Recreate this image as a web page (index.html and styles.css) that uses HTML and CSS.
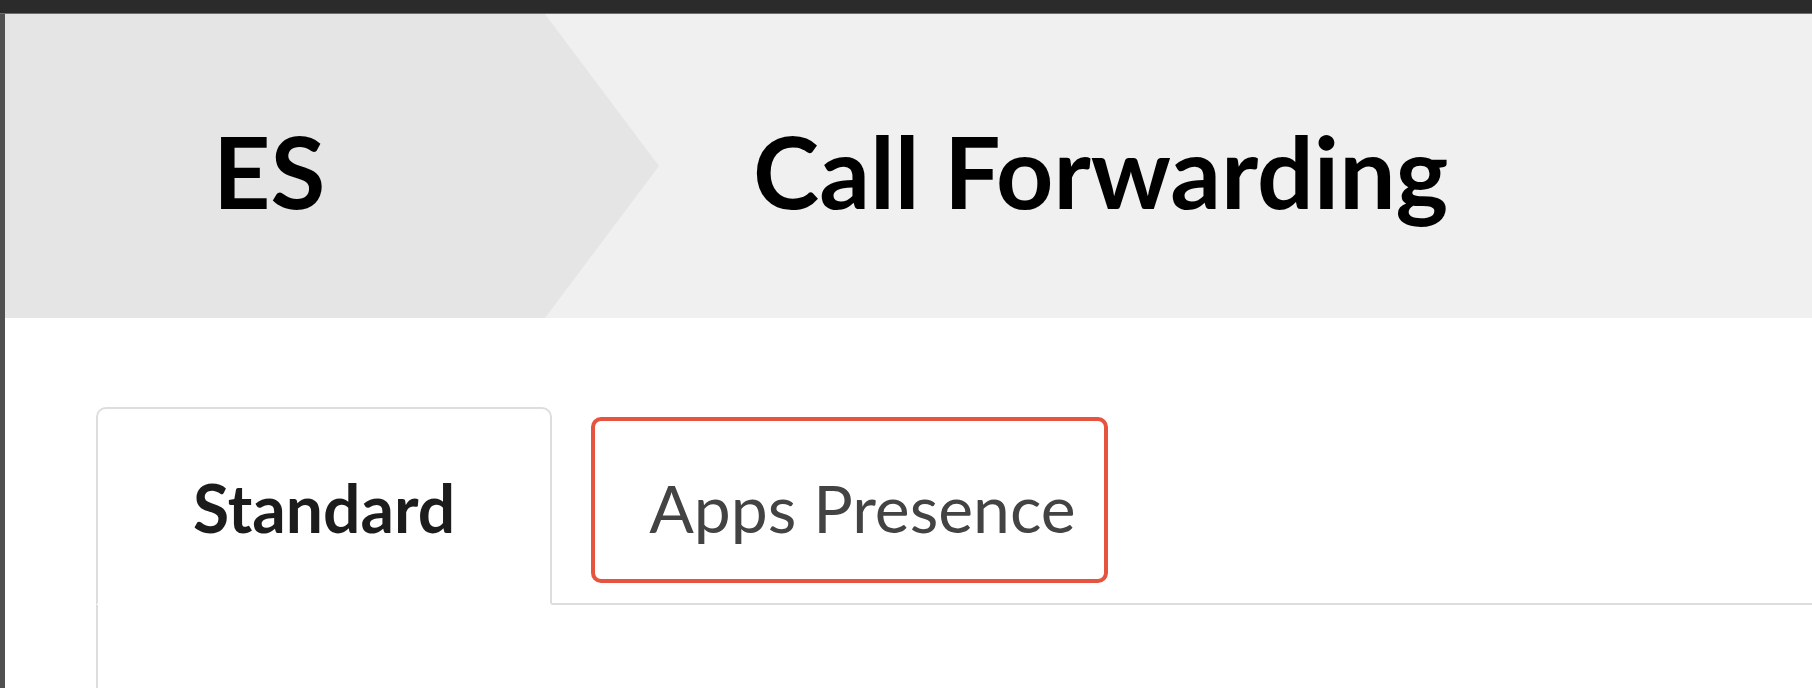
FILE: index.html
```html
<!DOCTYPE html>
<html lang="en">
<head>
  <meta charset="UTF-8" />
  <title>Call Forwarding</title>
  <link rel="stylesheet" href="styles.css">
</head>
<body>

<div class="topbar"></div>

<div class="window">
  <!-- breadcrumb header -->
  <div class="page-header">
    <div class="crumb crumb-parent">ES</div>
    <div class="crumb crumb-current">Call Forwarding</div>
  </div>

  <div class="tabs-area">
    <ul class="nav-tabs">
      <li class="tab active"><a href="#">Standard</a></li>
      <li class="tab">
        <a href="#">Apps Presence</a>
        <span class="highlight"></span>
      </li>
    </ul>
    <div class="tab-panel"></div>
  </div>
</div>

</body>
</html>
```

FILE: styles.css
```css
* {
  box-sizing: border-box;
  margin: 0;
  padding: 0;
}

body {
  background-color: #2b2b2b;
  font-family: "Lato", "Liberation Sans", sans-serif;
  height: 688px;
  overflow: hidden;
}

.topbar {
  height: 14px;
  background-color: #2b2b2b;
  border-bottom: 1px solid #6e6e6e;
}

.window {
  background-color: white;
  border-left: 5px solid #505050;
  height: 674px;
  overflow: hidden;
}

/* header with arrow breadcrumb */
.page-header {
  display: flex;
  align-items: center;
  height: 304px;
  background-color: #f0f0f0;
}

.crumb {
  font-size: 100px;
  font-weight: bold;
  color: #000;
  line-height: 1.2;
}

.crumb-parent {
  width: 654px;
  height: 100%;
  display: flex;
  align-items: center;
  padding-left: 208px;
  padding-top: 8px;
  background-color: #e5e5e5;
  clip-path: polygon(0 0, 540px 0, 100% 50%, 540px 100%, 0 100%);
}

.crumb-current {
  padding-left: 94px;
  padding-top: 8px;
}

/* tabs */
.tabs-area {
  padding-top: 89px;
  padding-left: 91px;
}

.nav-tabs {
  list-style: none;
  display: flex;
  border-bottom: 2px solid #dddddd;
}

.tab {
  position: relative;
  margin-bottom: -2px;
}

.tab a {
  display: block;
  padding: 59px 95px 56px 95px;
  font-size: 66px;
  line-height: 1.2;
  color: #434343;
  text-decoration: none;
  border: 2px solid transparent;
  border-radius: 10px 10px 0 0;
}

.tab.active a {
  color: #1c1c1c;
  font-weight: bold;
  background-color: white;
  border-color: #dddddd;
  border-bottom-color: white;
}

.highlight {
  position: absolute;
  left: 39px;
  top: 10px;
  width: 517px;
  height: 166px;
  border: 4px solid #e6533e;
  border-radius: 10px;
  pointer-events: none;
}

.tab-panel {
  height: 120px;
  border-left: 2px solid #dddddd;
}
```
